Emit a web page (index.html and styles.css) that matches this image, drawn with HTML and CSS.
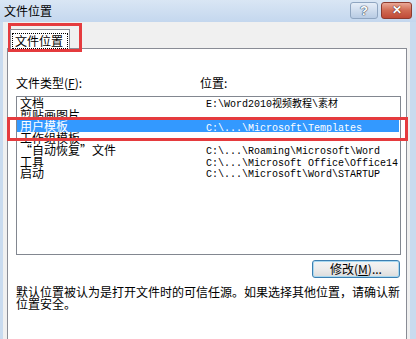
FILE: index.html
```html
<!DOCTYPE html>
<html lang="zh-CN">
<head>
  <meta charset="UTF-8">
  <title>文件位置</title>
  <link rel="stylesheet" href="styles.css">
</head>
<body>

<div class="window">
  <!-- Title bar -->
  <div class="titlebar">
    <span class="title">文件位置</span>
    <div class="caption-btns">
      <span class="cap help">?</span>
      <span class="cap close">✕</span>
    </div>
  </div>

  <div class="client">
    <div class="tabs">
      <div class="tab"><span class="focus">文件位置</span></div>
    </div>

    <div class="panel">
      <div class="labels">
        <span class="col-name">文件类型(<u>F</u>):</span>
        <span>位置:</span>
      </div>

      <div class="listbox">
        <div class="row"><span class="name">文档</span><span class="path">E:\Word2010视频教程\素材</span></div>
        <div class="row"><span class="name">剪贴画图片</span><span class="path"></span></div>
        <div class="row selected"><span class="name">用户模板</span><span class="path">C:\...\Microsoft\Templates</span></div>
        <div class="row"><span class="name">工作组模板</span><span class="path"></span></div>
        <div class="row"><span class="name">“自动恢复”文件</span><span class="path">C:\...\Roaming\Microsoft\Word</span></div>
        <div class="row"><span class="name">工具</span><span class="path">C:\...\Microsoft Office\Office14</span></div>
        <div class="row"><span class="name">启动</span><span class="path">C:\...\Microsoft\Word\STARTUP</span></div>
      </div>

      <div class="btn-row">
        <button class="btn">修改(<u>M</u>)...</button>
      </div>

      <p class="note">默认位置被认为是打开文件时的可信任源。如果选择其他位置，请确认新<br>位置安全。</p>
    </div>
  </div>

  <!-- red highlight boxes drawn over the dialog -->
  <div class="mark mark-tab"></div>
  <div class="mark mark-row"></div>
</div>

</body>
</html>
```

FILE: styles.css
```css
body {
  margin: 0;
  width: 416px;
  height: 339px;
  overflow: hidden;
  font-family: "Noto Sans CJK SC", "Liberation Sans", sans-serif;
  font-size: 12px;
  color: #000000;
}

.window {
  position: relative;
  width: 416px;
  height: 339px;
  background-color: #c9dbef;
}

.titlebar {
  height: 22px;
  display: flex;
  align-items: center;
  justify-content: space-between;
  padding-left: 4px;
  background: linear-gradient(#d9e6f4, #c4d7ee);
}

.title {
  line-height: 22px;
  font-size: 12px;
}

.caption-btns {
  display: flex;
  gap: 3px;
  margin-right: 4px;
  margin-top: -2px;
}

.cap {
  height: 15px;
  border-radius: 3px;
  display: flex;
  align-items: center;
  justify-content: center;
  font-family: "Liberation Sans", sans-serif;
  font-weight: bold;
  color: #ffffff;
}

.help {
  width: 26px;
  border: 1px solid #8fa5c0;
  background: linear-gradient(#e6eef8, #b8cbe3);
  font-size: 13px;
  text-shadow: 0 0 1px #3a4a60, 0 0 1px #3a4a60, 0 0 1px #3a4a60;
}

.close {
  width: 29px;
  border: 1px solid #8d3b2e;
  background: linear-gradient(#eaa897, #d06a52 50%, #c04a36);
  font-size: 12px;
  text-shadow: 0 0 1px #5a1a10, 0 0 1px #5a1a10;
}

.client {
  background-color: #f0f0f0;
  border-left: 3px solid #c9dbef;
  border-right: 6px solid #c9dbef;
  padding-left: 4px;
  padding-right: 3px;
  height: 317px;
}

.tabs {
  height: 26px;
  display: flex;
  align-items: flex-end;
  padding-left: 3px;
}

.tab {
  position: relative;
  z-index: 1;
  height: 20px;
  width: 60px;
  margin-bottom: -1px;
  box-sizing: border-box;
  border: 1px solid #898c95;
  border-bottom: none;
  background-color: #ffffff;
  padding: 2px 0 0 1px;
}

.focus {
  display: inline-block;
  border: 1px dotted #000000;
  padding: 0 4px 0 2px;
  line-height: 14px;
  font-size: 12px;
}

.panel {
  width: 400px;
  height: 300px;
  box-sizing: border-box;
  border: 1px solid #898c95;
  background-color: #ffffff;
  padding: 27px 5px 0 8px;
}

.labels {
  display: flex;
  line-height: 14px;
  margin-bottom: 6px;
}

.col-name {
  width: 184px;
}

.listbox {
  width: 385px;
  height: 159px;
  box-sizing: border-box;
  border: 1px solid #828790;
}

.row {
  display: flex;
  height: 11.7px;
  line-height: 11.7px;
  overflow: hidden;
  white-space: nowrap;
}

.name {
  width: 186px;
  padding-left: 3px;
}

.path {
  font-family: "Liberation Mono", monospace;
  font-size: 10px;
  padding-top: 2px;
}

.row.selected {
  position: relative;
  height: 13px;
  line-height: 13px;
  margin: -1px 1px 0 0;
  background-color: #3399ff;
  color: #ffffff;
}

.row.selected .path {
  padding-top: 3px;
}

.btn-row {
  display: flex;
  justify-content: flex-end;
  margin-top: 5px;
  padding-right: 1px;
}

.btn {
  width: 88px;
  height: 18px;
  padding: 0;
  border: 1px solid #3c7fb1;
  border-radius: 3px;
  background: linear-gradient(#f4f4f4, #ececec 50%, #dcdcdc);
  box-shadow: inset 0 0 0 1px #a8d8f0;
  font-family: "Noto Sans CJK SC", "Liberation Sans", sans-serif;
  font-size: 12px;
  line-height: 16px;
  color: #000000;
}

.note {
  margin: 8px 0 0 0;
  line-height: 12px;
  white-space: nowrap;
}

/* red annotation rectangles */
.mark {
  position: absolute;
  border: 3px solid #e53b3e;
  box-sizing: border-box;
}

.mark-tab {
  left: 8px;
  top: 23px;
  width: 74px;
  height: 29px;
}

.mark-row {
  left: 7px;
  top: 117px;
  width: 401px;
  height: 24px;
}
```
